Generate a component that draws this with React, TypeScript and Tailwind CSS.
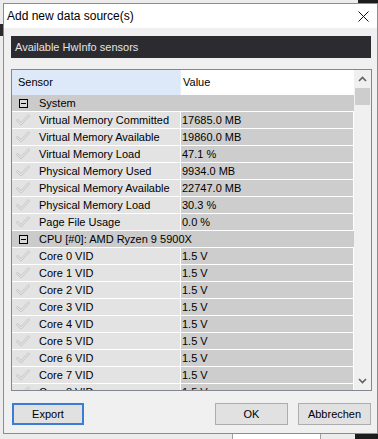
import React from 'react';

type Row =
  | { kind: 'group'; label: string }
  | { kind: 'item'; label: string; value: string };

const rows: Row[] = [
  { kind: 'group', label: 'System' },
  { kind: 'item', label: 'Virtual Memory Committed', value: '17685.0 MB' },
  { kind: 'item', label: 'Virtual Memory Available', value: '19860.0 MB' },
  { kind: 'item', label: 'Virtual Memory Load', value: '47.1 %' },
  { kind: 'item', label: 'Physical Memory Used', value: '9934.0 MB' },
  { kind: 'item', label: 'Physical Memory Available', value: '22747.0 MB' },
  { kind: 'item', label: 'Physical Memory Load', value: '30.3 %' },
  { kind: 'item', label: 'Page File Usage', value: '0.0 %' },
  { kind: 'group', label: 'CPU [#0]: AMD Ryzen 9 5900X' },
  ...Array.from({ length: 9 }, (_, i) => ({
    kind: 'item' as const,
    label: `Core ${i} VID`,
    value: '1.5 V',
  })),
];

const CheckMark = () => (
  <svg width="14" height="12" viewBox="0 0 14 12" className="ml-[4px]">
    <path d="M1.5 6.5 L5 9.8 L12.5 1.8" fill="none" stroke="#c9c9c9" strokeWidth="2.6" strokeLinecap="round" strokeLinejoin="round" />
    <path d="M1.5 6.5 L5 9.8 L12.5 1.8" fill="none" stroke="#ededed" strokeWidth="1" strokeLinecap="round" strokeLinejoin="round" />
  </svg>
);

const MinusBox = () => (
  <div className="ml-[7px] w-[9px] h-[9px] border border-black bg-[#d8d8d8] flex items-center justify-center">
    <div className="w-[5px] h-px bg-black" />
  </div>
);

const Chevron = ({ down }: { down?: boolean }) => (
  <svg width="9" height="6" viewBox="0 0 9 6">
    <path
      d={down ? 'M1 1 L4.5 4.5 L8 1' : 'M1 5 L4.5 1.5 L8 5'}
      fill="none"
      stroke="#606060"
      strokeWidth="1.6"
    />
  </svg>
);

const SensorTable = () => (
  <div className="mt-[11px] mr-0 h-[322px] border border-[#828790] bg-white flex overflow-hidden">
    <div className="flex-1 flex flex-col overflow-hidden">
      {/* header */}
      <div className="h-[25px] flex shrink-0">
        <div className="w-[169px] bg-[#dde9f8] flex items-center pl-[6px] border-r border-[#e6eef8]">Sensor</div>
        <div className="flex-1 bg-white flex items-center pl-[2px]">Value</div>
      </div>
      {rows.map((r, i) =>
        r.kind === 'group' ? (
          <div key={i} className="h-[17px] shrink-0 flex items-center bg-[#cbcbcb] border-b border-white">
            <MinusBox />
            <span className="ml-[11px]">{r.label}</span>
          </div>
        ) : (
          <div key={i} className="h-[17px] shrink-0 flex border-b border-white">
            <div className="w-[169px] bg-[#e3e3e3] flex items-center border-r border-white">
              <CheckMark />
              <span className="ml-[9px]">{r.label}</span>
            </div>
            <div className="flex-1 bg-[#cdcdcd] flex items-center pl-px border-r border-white">{r.value}</div>
          </div>
        )
      )}
    </div>
    {/* scrollbar */}
    <div className="w-[17px] bg-[#f0f0f0] flex flex-col shrink-0">
      <div className="h-[18px] flex items-center justify-center">
        <Chevron />
      </div>
      <div className="mx-px h-[17px] bg-[#cdcdcd]" />
      <div className="flex-1" />
      <div className="h-[18px] flex items-center justify-center">
        <Chevron down />
      </div>
    </div>
  </div>
);

export default function App() {
  return (
    <div
      className="relative w-[378px] h-[439px] overflow-hidden bg-[#ececec] text-[11px] text-black"
      style={{ fontFamily: '"Liberation Sans", Arial, sans-serif' }}
    >
      {/* bits of the windows behind */}
      <div className="absolute left-[358px] top-0 w-[20px] h-[3px] bg-[#1c1c1c]" />
      <div className="absolute left-0 top-[24px] w-[3px] h-[12px] bg-[#2a2a2a]" />
      <div className="absolute left-[355px] top-[434px] w-[23px] h-[5px] bg-[#1c1c1c]" />
      <div className="absolute left-[232px] top-[434px] w-[89px] h-[5px] bg-white border-l border-r border-[#a0a0a0]" />

      {/* dialog */}
      <div className="relative ml-[3px] mt-[3px] w-[375px] h-[431px] border border-[#8c8c8c] bg-[#f0f0f0] flex flex-col">
        <div className="h-[24px] bg-white flex items-center justify-between pl-[3px] pr-[8px] shrink-0">
          <span className="text-[12px]">Add new data source(s)</span>
          <svg width="11" height="11" viewBox="0 0 11 11">
            <path d="M0.5 0.5 L10.5 10.5 M10.5 0.5 L0.5 10.5" stroke="#111" strokeWidth="1" />
          </svg>
        </div>

        <div className="flex-1 flex flex-col pl-[7px] pr-[5px]">
          <div className="mt-[8px] mr-px h-[22px] bg-[#2c2c30] text-[#e4e4e4] flex items-center pl-[4px]">
            Available HwInfo sensors
          </div>

          <SensorTable />

          <div className="mt-[12px] flex items-center">
            <button className="ml-px w-[72px] h-[22px] bg-[#e1e1e1] border-2 border-[#3c7bd6] flex items-center justify-center">
              Export
            </button>
            <div className="flex-1" />
            <button className="w-[73px] h-[22px] bg-[#e1e1e1] border border-[#adadad] flex items-center justify-center">
              OK
            </button>
            <button className="ml-[10px] mr-[1px] w-[73px] h-[22px] bg-[#e1e1e1] border border-[#adadad] flex items-center justify-center">
              Abbrechen
            </button>
          </div>
        </div>
      </div>
    </div>
  );
}
